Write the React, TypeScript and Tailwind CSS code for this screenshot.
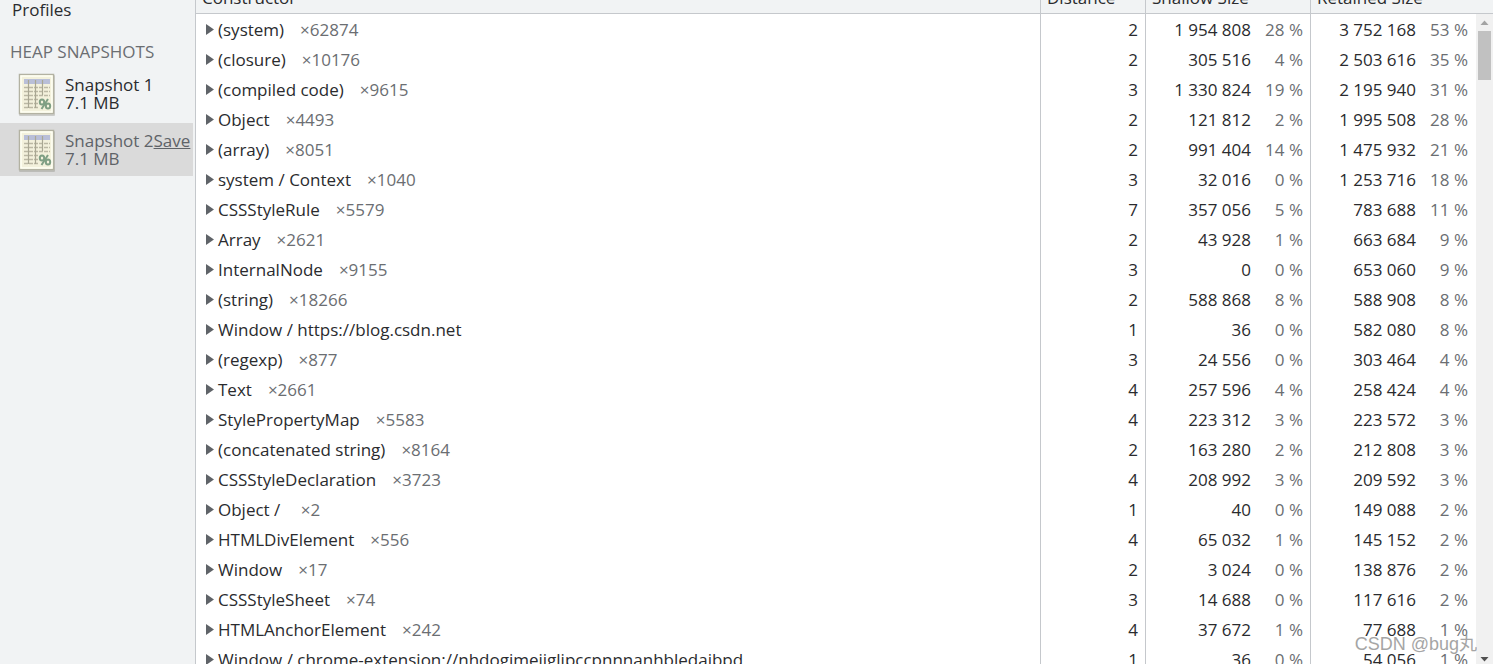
type Row = [name: string, count: string, distance: string, shallow: string, shallowPct: string, retained: string, retainedPct: string];

const rows: Row[] = [
  ['(system)', '×62874', '2', '1 954 808', '28 %', '3 752 168', '53 %'],
  ['(closure)', '×10176', '2', '305 516', '4 %', '2 503 616', '35 %'],
  ['(compiled code)', '×9615', '3', '1 330 824', '19 %', '2 195 940', '31 %'],
  ['Object', '×4493', '2', '121 812', '2 %', '1 995 508', '28 %'],
  ['(array)', '×8051', '2', '991 404', '14 %', '1 475 932', '21 %'],
  ['system / Context', '×1040', '3', '32 016', '0 %', '1 253 716', '18 %'],
  ['CSSStyleRule', '×5579', '7', '357 056', '5 %', '783 688', '11 %'],
  ['Array', '×2621', '2', '43 928', '1 %', '663 684', '9 %'],
  ['InternalNode', '×9155', '3', '0', '0 %', '653 060', '9 %'],
  ['(string)', '×18266', '2', '588 868', '8 %', '588 908', '8 %'],
  ['Window / https://blog.csdn.net', '', '1', '36', '0 %', '582 080', '8 %'],
  ['(regexp)', '×877', '3', '24 556', '0 %', '303 464', '4 %'],
  ['Text', '×2661', '4', '257 596', '4 %', '258 424', '4 %'],
  ['StylePropertyMap', '×5583', '4', '223 312', '3 %', '223 572', '3 %'],
  ['(concatenated string)', '×8164', '2', '163 280', '2 %', '212 808', '3 %'],
  ['CSSStyleDeclaration', '×3723', '4', '208 992', '3 %', '209 592', '3 %'],
  ['Object / ', '×2', '1', '40', '0 %', '149 088', '2 %'],
  ['HTMLDivElement', '×556', '4', '65 032', '1 %', '145 152', '2 %'],
  ['Window', '×17', '2', '3 024', '0 %', '138 876', '2 %'],
  ['CSSStyleSheet', '×74', '3', '14 688', '0 %', '117 616', '2 %'],
  ['HTMLAnchorElement', '×242', '4', '37 672', '1 %', '77 688', '1 %'],
  ['Window / chrome-extension://nhdogjmejiglipccpnnnanhbledajbpd', '', '1', '36', '0 %', '54 056', '1 %'],
];

function SnapshotIcon() {
  return (
    <svg className="h-12 w-10 shrink-0" viewBox="0 0 40 48" aria-hidden="true">
      <rect x="3" y="5" width="36" height="41" rx="1" fill="#77776a" opacity=".3" />
      <rect x="3.5" y="4.5" width="34" height="39" fill="#f3f1dc" stroke="#b3b2a2" strokeWidth="1.5" />
      <rect x="5" y="6" width="31" height="36" fill="none" stroke="#fffff4" strokeWidth="1.5" />
      <rect x="8" y="9" width="26" height="5" fill="#b9bfd8" />
      <path
        d="M8 17.5h26M8 21.5h26M8 25.5h26M8 29.5h14M8 33.5h14M8 37.5h14"
        stroke="#bbb8a4"
        strokeWidth="1.5"
        strokeDasharray="4 1"
      />
      <path d="M12.5 10v28M19.5 10v28M26.5 10v15" stroke="#a9a793" strokeWidth="1.2" />
      <g fill="none" stroke="#7f9f84" strokeWidth="2">
        <ellipse cx="26" cy="32" rx="2.2" ry="2.5" />
        <ellipse cx="32" cy="36" rx="2.2" ry="2.5" />
        <path d="M32 29L25.500 39" />
      </g>
    </svg>
  );
}

function Snapshot({ name, size, selected = false }: { name: string; size: string; selected?: boolean }) {
  return (
    <li className={selected ? 'flex h-[53px] items-center bg-[#dadada] pl-4 text-[#5f6368]' : 'flex h-[53px] items-center pl-4'}>
      <SnapshotIcon />
      <div className="ml-[9px] whitespace-nowrap leading-[18px]">
        <div>
          {name}
          {selected && <button type="button" className="cursor-pointer underline">Save</button>}
        </div>
        <div>{size}</div>
      </div>
    </li>
  );
}

function Size({ value, percent }: { value: string; percent: string }) {
  return (
    <div className="flex justify-end">
      <span>{value}</span>
      <span className="w-[52px] text-right text-[#6b6e72]">{percent}</span>
    </div>
  );
}

function HeaderCell({ children }: { children: string }) {
  return (
    <th scope="col" className="border-b border-l border-[#c5c8cc] p-0 font-normal first:border-l-0">
      <div className="flex h-[13px] items-end overflow-hidden pb-[3px] pl-1.5">
        <span className="leading-6">{children}</span>
      </div>
    </th>
  );
}

export default function App() {
  return (
    <div className="flex h-screen overflow-hidden bg-white font-['Open_Sans','Noto_Sans',sans-serif] text-[17px] leading-6 text-[#2a2b2e]">
      <aside className="w-[193px] shrink-0 bg-[#f1f3f4]">
        <h1 className="-mt-0.5 pl-3">Profiles</h1>
        <h2 className="mt-[18px] pl-2.5 text-[#6b6e72]">HEAP SNAPSHOTS</h2>
        <ul className="mt-[3px] flex flex-col gap-[3px]">
          <Snapshot name="Snapshot 1" size="7.1 MB" />
          <Snapshot name="Snapshot 2" size="7.1 MB" selected />
        </ul>
      </aside>
      <div className="w-[3px] shrink-0 border-r border-[#c5c8cc] bg-[#f1f3f4]" />
      <main className="relative min-w-0 flex-1">
        <table className="w-full table-fixed border-separate border-spacing-0">
          <colgroup>
            <col />
            <col className="w-[105px]" />
            <col className="w-[165px]" />
            <col className="w-[183px]" />
          </colgroup>
          <thead className="bg-[#f1f3f4] text-left">
            <tr>
              <HeaderCell>Constructor</HeaderCell>
              <HeaderCell>Distance</HeaderCell>
              <HeaderCell>Shallow Size</HeaderCell>
              <HeaderCell>Retained Size</HeaderCell>
            </tr>
          </thead>
          <tbody>
            {rows.map(([name, count, distance, shallow, shallowPct, retained, retainedPct], i) => (
              <tr key={i} className="h-[30px]">
                <td className="p-0 pt-0.5 pl-2.5">
                  <div className="flex items-center whitespace-pre">
                    <svg className="mr-1 h-3 w-2 shrink-0" viewBox="0 0 8 12" aria-hidden="true">
                      <path d="M0 0L8 5.500 0 11z" fill="#5f6368" />
                    </svg>
                    <span>{name}</span>
                    {count && <span className="ml-4 text-[#6b6e72]">{count}</span>}
                  </div>
                </td>
                <td className="border-l border-[#c5c8cc] p-0 pt-0.5 pr-[7px] text-right">{distance}</td>
                <td className="border-l border-[#c5c8cc] p-0 pt-0.5 pr-[7px]">
                  <Size value={shallow} percent={shallowPct} />
                </td>
                <td className="border-l border-[#c5c8cc] p-0 pt-0.5 pr-[25px]">
                  <Size value={retained} percent={retainedPct} />
                </td>
              </tr>
            ))}
          </tbody>
        </table>
        <div className="absolute top-3.5 right-0 bottom-0 flex w-[17px] flex-col items-center bg-[#f1f1f1]">
          <svg className="h-[17px] w-[17px]" viewBox="0 0 17 17" aria-hidden="true">
            <path d="M4.5 11L8.5 6.5 12.5 11z" fill="#a3a3a3" />
          </svg>
          <div className="h-[49px] w-[13px] bg-[#c1c1c1]" />
          <svg className="mt-auto h-[17px] w-[17px]" viewBox="0 0 17 17" aria-hidden="true">
            <path d="M4.5 10L8.5 14.5 12.5 10z" fill="#505050" />
          </svg>
        </div>
        <div className="absolute right-4 bottom-2 font-['Liberation_Sans','Noto_Sans_CJK_SC',sans-serif] text-[18px] text-[#8f8f8f] opacity-80">
          CSDN @bug丸
        </div>
      </main>
    </div>
  );
}
